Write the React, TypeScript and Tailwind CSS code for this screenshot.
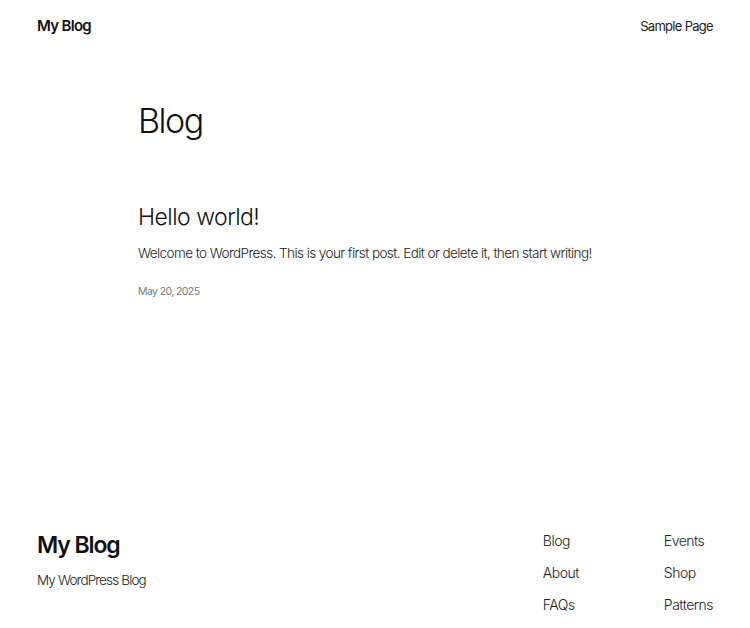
export default function App() {
  const font = { fontFamily: "Inter, 'Noto Sans', sans-serif" };
  return (
    <div className="flex min-h-[628px] flex-col bg-white text-[#111]" style={font}>
      <header className="flex items-center justify-between px-[37px] pt-[15px]">
        <a className="text-[15px] font-semibold tracking-[-0.7px]">My Blog</a>
        <nav className="text-[13px] tracking-[-0.7px] text-[#222]">Sample Page</nav>
      </header>

      <main className="pl-[138px] pt-[63px]">
        <h1 className="text-[34px] font-light leading-[1.2] tracking-[-1.5px]">Blog</h1>
        <article className="pt-[63px]">
          <h2 className="text-[23px] font-light leading-[1.2] tracking-[-0.5px]">Hello world!</h2>
          <p className="mt-[11px] text-[13.5px] font-light tracking-[-0.57px] text-[#222]">
            Welcome to WordPress. This is your first post. Edit or delete it, then start writing!
          </p>
          <p className="mt-[21px] text-[10.5px] tracking-[-0.6px] text-[#777]">May 20, 2025</p>
        </article>
      </main>

      <footer className="mt-auto flex justify-between px-[37px] pb-[13px]">
        <div>
          <div className="text-[23px] font-semibold tracking-[-1.1px]">My Blog</div>
          <div className="mt-[7px] text-[13.5px] font-light tracking-[-0.85px] text-[#222]">My WordPress Blog</div>
        </div>
        <div className="grid grid-cols-[121px_auto] gap-y-[11px] pt-[2px] text-[14px] font-light tracking-[-0.5px] text-[#222]">
          <span>Blog</span>
          <span>Events</span>
          <span>About</span>
          <span>Shop</span>
          <span>FAQs</span>
          <span>Patterns</span>
        </div>
      </footer>
    </div>
  );
}
